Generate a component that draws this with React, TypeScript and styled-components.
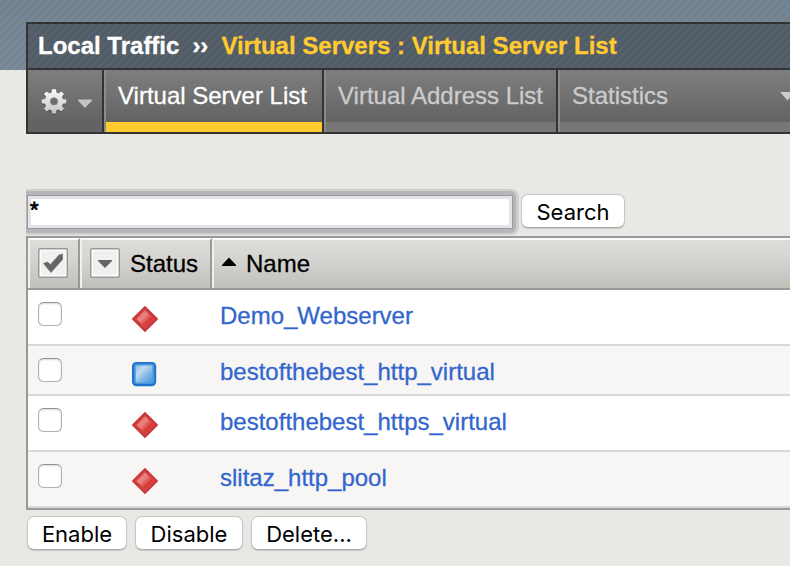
import React from 'react';
import styled, { createGlobalStyle } from 'styled-components';

const GlobalStyle = createGlobalStyle`
  html, body { margin: 0; overflow: hidden; background: #e9e8e4; }
  * { box-sizing: border-box; }
`;

const Page = styled.div`
  width: 790px;
  height: 566px;
  overflow: hidden;
  padding: 22px 0 0 26px;
  font: 24px/28px "Liberation Sans", Arial, sans-serif;
  -webkit-text-stroke: 0.3px currentColor;
  background:
    repeating-linear-gradient(135deg, transparent 0 2.2px, rgba(40, 55, 70, 0.06) 3.2px 5px, transparent 5.66px) 0 0 / 100% 70px no-repeat,
    linear-gradient(#748594, #7b8b9a) 0 0 / 100% 70px no-repeat,
    #e9e8e4;
`;

const TitleBar = styled.header`
  display: flex;
  height: 48px;
  border: 2px solid #333;
  border-right: 0;
  padding: 8px 0 0 10px;
  font-weight: bold;
  white-space: pre;
  color: #fff;
  background:
    repeating-linear-gradient(135deg, transparent 0 2.2px, rgba(20, 30, 40, 0.09) 3.2px 5px, transparent 5.66px),
    #57616b;
`;

const Chevrons = styled.span`
  margin-left: 13px;
  width: 29px;
`;

const Crumb = styled.span`
  color: #ffcb2f;
`;

const TabBar = styled.nav`
  display: flex;
  height: 64px;
  border-left: 2px solid #333;
  border-bottom: 2px solid #333;
  background: linear-gradient(#7e7e7e, #636363 52px);
`;

const GearCell = styled.div`
  display: flex;
  flex: none;
  width: 76px;
  padding: 17px 0 0 12px;
  gap: 9px;
  border-right: 2px solid #333;
`;

const Tab = styled.div<{ $width: number; $active?: boolean }>`
  display: flex;
  flex: none;
  width: ${p => p.$width}px;
  padding: 12px 0 0 12px;
  white-space: nowrap;
  color: ${p => (p.$active ? '#fff' : '#ccc')};
  border-left: 2px solid #8b8b8b;
  border-right: 2px solid #333;
  background: linear-gradient(${p => (p.$active ? '#ffcb2f, #ffcb2f' : '#777, #777')}) 0 52px / 100% 10px no-repeat;
`;

const TabArrow = styled.svg`
  margin: 10px 0 0 112px;
`;

const SearchRow = styled.div`
  display: flex;
  margin-top: 55px;
  height: 47px;
`;

const FieldGlow = styled.div`
  width: 493px;
  height: 46px;
  padding: 2px 3px 2px 0;
  border-radius: 0 8px 8px 0;
  background: #d0d1cf;
`;

const FieldRing = styled.div`
  height: 42px;
  padding: 4px 3px 4px 1px;
  border-radius: 0 6px 6px 0;
  background: #b4b6b9;
`;

const Field = styled.div`
  height: 34px;
  border: 1px solid #999b9e;
  padding: 1px 2px 2px 2px;
  background: linear-gradient(#fff, #fff) 3px 3px / 478px 26px no-repeat, #e3e4e6;
  font-size: 22px;
  line-height: 26px;
  -webkit-text-stroke-width: 0.8px;
  color: #000;
`;

const Button = styled.button<{ $width: number }>`
  width: ${p => p.$width}px;
  height: 34px;
  padding: 2px 0 0;
  border: 1px solid #c6c6c4;
  border-bottom-color: #aaa;
  border-radius: 7px;
  background: #fff;
  box-shadow: 0 1px 1px rgba(0, 0, 0, 0.14);
  color: #000;
  font: 22px/30px Inter, sans-serif;
  -webkit-text-stroke-width: 0;
`;

const SearchButton = styled(Button)`
  margin: 5px 0 0 2px;
`;

const Table = styled.section`
  height: 274px;
  border: 2px solid #999;
  border-right: 0;
`;

const HeaderRow = styled.div`
  display: grid;
  grid-template-columns: 52px 132px 1fr;
  height: 52px;
  border-bottom: 2px solid #999;
`;

const HeaderCell = styled.div<{ $last?: boolean }>`
  display: flex;
  align-items: flex-start;
  padding: 8px 0 0 8px;
  border-top: 2px solid #fafafa;
  border-left: 2px solid #f0f0ee;
  border-right: ${p => (p.$last ? '0' : '2px solid #999')};
  background: linear-gradient(#dddcd9, #d5d4d0 40%, #c0bfba);
  color: #000;
`;

const HeaderLabel = styled.span`
  margin: 2px 0 0 10px;
`;

const Row = styled.div<{ $height: number; $shade: boolean }>`
  display: grid;
  grid-template-columns: 104px 88px 1fr;
  height: ${p => p.$height}px;
  border-bottom: 2px solid #d9d9d9;
  background: ${p => (p.$shade ? '#f7f6f5' : '#fff')};
`;

const Checkbox = styled.span`
  width: 24px;
  height: 24px;
  margin: 12px 0 0 10px;
  border: 1px solid #b2b2b2;
  border-top-color: #929292;
  border-radius: 5.5px;
  background: #fff;
  box-shadow: inset 0 1px 2px rgba(0, 0, 0, 0.16);
`;

const StatusIcon = styled.svg`
  margin-top: 15px;
`;

const Name = styled.a`
  margin-top: 12px;
  color: #36c;
`;

const Actions = styled.footer`
  display: flex;
  gap: 8px;
  padding: 6px 0 0 1px;
`;

const Gear = () => (
  <svg width="28" height="30" viewBox="-14 -14 28 30">
    <defs>
      <linearGradient id="gear" gradientUnits="userSpaceOnUse" x1="0" y1="-12" x2="0" y2="12">
        <stop offset="0" stopColor="#fafafa" />
        <stop offset="1" stopColor="#c4c4c4" />
      </linearGradient>
    </defs>
    {[
      { y: 1.8, fill: '#4f4f4f', opacity: 0.7 },
      { y: 0.4, fill: 'url(#gear)', opacity: 1 },
    ].map(layer => (
      <g key={layer.y} transform={`translate(0 ${layer.y})`}>
        <path
          fill={layer.fill}
          opacity={layer.opacity}
          d="M-1.9-12.2H1.9L2.4-8.9 4.6-8 7.3-10 10-7.3 8-4.6 8.9-2.2 12.2-1.8V1.8L8.9 2.3 8 4.6 10 7.3 7.3 10 4.6 8 2.3 8.9 1.9 12.2H-1.9L-2.4 8.9-4.6 8-7.3 10-10 7.3-8 4.6-8.9 2.3-12.2 1.8V-1.8L-8.9-2.3-8-4.6-10-7.3-7.3-10-4.6-8-2.4-8.9z"
        />
      </g>
    ))}
    <circle cy=".4" r="3.7" fill="#6c6c6c" stroke="#8d8d8d" strokeWidth=".8" />
  </svg>
);

const HeaderBox = ({ kind }: { kind: 'check' | 'arrow' }) => (
  <svg width="30" height="30" viewBox="0 0 30 30">
    <rect x=".75" y=".75" width="28.5" height="28.5" rx="1.5" fill="#fff" stroke="#999" strokeWidth="1.5" />
    <rect x="3" y="3" width="24" height="24" fill="#f0f0ee" />
    {kind === 'check'
      ? <path d="M5.5 15.5l4-1.5 3 2.5L21 7l3.5-1v5.5L13 24.5z" fill="#666" stroke="#666" strokeWidth=".6" />
      : <path d="M8 12h14v1l-7 7-7-7z" fill="#666" />}
  </svg>
);

const Offline = () => (
  <StatusIcon width="28" height="30" viewBox="0 0 28 30">
    <defs>
      <linearGradient id="red" x1="0" y1="0" x2="1" y2="1">
        <stop offset="0" stopColor="#e4716e" />
        <stop offset=".4" stopColor="#e9827f" />
        <stop offset=".55" stopColor="#df5b59" />
        <stop offset=".65" stopColor="#d83c3b" />
        <stop offset="1" stopColor="#d43030" />
      </linearGradient>
    </defs>
    <path d="M13 1.7L25.3 14 13 26.3.7 14z" fill="#c6373a" stroke="#c6373a" strokeWidth="1.4" strokeLinejoin="round" />
    <path d="M13 3.8L23 14 13 24 3 14z" fill="#db4746" />
    <path d="M13 5.6L21.4 14 13 22.4 4.6 14z" fill="url(#red)" />
  </StatusIcon>
);

const Unknown = () => (
  <StatusIcon width="28" height="30" viewBox="0 0 28 30">
    <defs>
      <linearGradient id="blue" x1="0" y1="0" x2="1" y2="1">
        <stop offset="0" stopColor="#8dbfea" />
        <stop offset=".32" stopColor="#bedaf2" />
        <stop offset=".6" stopColor="#86b9e7" />
        <stop offset="1" stopColor="#4792d8" />
      </linearGradient>
    </defs>
    <rect x="0" y="1" width="24.2" height="24.2" rx="4.5" fill="#1c73cb" />
    <rect x="2" y="2.8" width="20.2" height="20.2" rx="2.5" fill="#4b99df" />
    <rect x="3.8" y="4.6" width="16.6" height="16.8" rx="1" fill="url(#blue)" />
  </StatusIcon>
);

const servers = [
  { name: 'Demo_Webserver', unknown: false, height: 56 },
  { name: 'bestofthebest_http_virtual', unknown: true, height: 50 },
  { name: 'bestofthebest_https_virtual', unknown: false, height: 56 },
  { name: 'slitaz_http_pool', unknown: false, height: 56 },
];

export default function App() {
  return (
    <>
      <GlobalStyle />
      <Page>
        <TitleBar>
          <span>Local Traffic</span>
          <Chevrons>››</Chevrons>
          <Crumb>Virtual Servers : Virtual Server List</Crumb>
        </TitleBar>
        <TabBar>
          <GearCell>
            <Gear />
            <svg width="16" height="30" viewBox="0 0 16 30"><path d="M1 12.5h14v1l-7 7.5-7-7.5z" fill="#c4c4c4" /></svg>
          </GearCell>
          <Tab $width={220} $active>Virtual Server List</Tab>
          <Tab $width={234}>Virtual Address List</Tab>
          <Tab $width={280}>
            Statistics
            <TabArrow width="16" height="10" viewBox="0 0 16 10"><path d="M0 0h15L7.5 8.5z" fill="#ccc" /></TabArrow>
          </Tab>
        </TabBar>
        <SearchRow>
          <FieldGlow><FieldRing><Field>*</Field></FieldRing></FieldGlow>
          <SearchButton $width={104}>Search</SearchButton>
        </SearchRow>
        <Table>
          <HeaderRow>
            <HeaderCell><HeaderBox kind="check" /></HeaderCell>
            <HeaderCell><HeaderBox kind="arrow" /><HeaderLabel>Status</HeaderLabel></HeaderCell>
            <HeaderCell $last>
              <svg width="14" height="30" viewBox="0 0 14 30"><path d="M7 9.5l7 7.5v1H0v-1z" fill="#000" /></svg>
              <HeaderLabel>Name</HeaderLabel>
            </HeaderCell>
          </HeaderRow>
          {servers.map((s, i) => (
            <Row key={s.name} $height={s.height} $shade={i % 2 === 1}>
              <Checkbox />
              {s.unknown ? <Unknown /> : <Offline />}
              <Name>{s.name}</Name>
            </Row>
          ))}
        </Table>
        <Actions>
          <Button $width={100}>Enable</Button>
          <Button $width={108}>Disable</Button>
          <Button $width={116}>Delete...</Button>
        </Actions>
      </Page>
    </>
  );
}
